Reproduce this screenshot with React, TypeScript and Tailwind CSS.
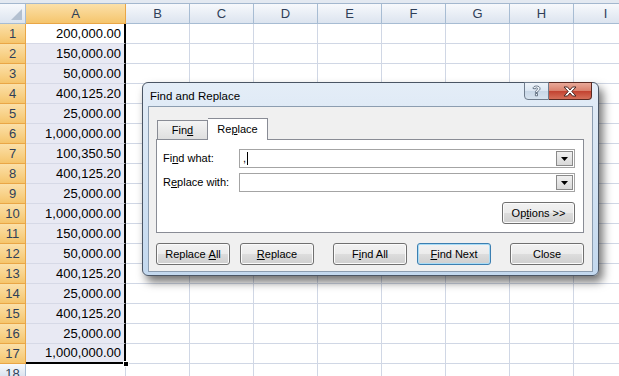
import React from "react";

const values = [
  "200,000.00",
  "150,000.00",
  "50,000.00",
  "400,125.20",
  "25,000.00",
  "1,000,000.00",
  "100,350.50",
  "400,125.20",
  "25,000.00",
  "1,000,000.00",
  "150,000.00",
  "50,000.00",
  "400,125.20",
  "25,000.00",
  "400,125.20",
  "25,000.00",
  "1,000,000.00",
];

const cols = ["B", "C", "D", "E", "F", "G", "H", "I"];

const btnBg =
  "bg-[linear-gradient(to_bottom,#f2f2f2_0%,#ebebeb_50%,#dddddd_50%,#cfcfcf_100%)]";

const Btn = ({
  children,
  className = "",
  focused = false,
}: {
  children: React.ReactNode;
  className?: string;
  focused?: boolean;
}) => (
  <div
    className={`h-[22px] rounded-[3px] border flex items-center justify-center text-[11px] text-black ${btnBg} ${
      focused
        ? "border-[#3c7fb1] shadow-[inset_0_0_0_1px_#a9dcf6]"
        : "border-[#707070] shadow-[inset_0_0_0_1px_#fbfbfb]"
    } ${className}`}
  >
    {children}
  </div>
);

const Combo = ({ value }: { value?: string }) => (
  <div className="w-[336px] h-[19px] border border-[#a4a4a4] bg-white flex items-stretch">
    <div className="flex-1 flex items-center pl-[3px] text-[11px] text-black">
      {value && (
        <>
          <span>{value}</span>
          <span className="w-px h-[13px] bg-black ml-px" />
        </>
      )}
    </div>
    <div className="w-[17px] border border-[#8a8a8a] m-px bg-gradient-to-b from-[#f0f0f0] to-[#d9d9d9] flex items-center justify-center">
      <svg width="7" height="4" viewBox="0 0 7 4">
        <path d="M0 0h7L3.5 4z" fill="#000" />
      </svg>
    </div>
  </div>
);

const Dialog = () => (
  <div className="absolute left-[142px] top-[82px] w-[457px] h-[194px] rounded-[6px] border border-[#4a5564] bg-gradient-to-b from-[#e4edf7] via-[#d3e3f3] to-[#c3d8ee] shadow-[4px_6px_10px_rgba(0,0,0,0.55)] font-['Liberation_Sans',sans-serif]">
    {/* title bar */}
    <div className="h-[23px] flex items-start relative">
      <div className="pl-[7px] pt-[8px] text-[11.5px] text-black leading-none">
        Find and Replace
      </div>
      <div className="ml-auto mr-[6px] flex -mt-px">
        <div className="w-[25px] h-[18px] rounded-bl-[4px] border border-[#6f7c8c] bg-[linear-gradient(to_bottom,#eef3f9_0%,#dbe6f2_50%,#c7d6e6_50%,#d7e3ef_100%)] flex items-center justify-center">
          <svg width="9" height="12" viewBox="0 0 9 12">
            <path
              d="M1 3.5C1 1.8 2.6 1 4.5 1S8 2 8 3.6c0 1.3-.9 1.9-1.8 2.5-.6.4-.7.7-.7 1.4H3.4c0-1.3.3-1.8 1.2-2.4.6-.4.9-.7.9-1.3 0-.6-.4-1-1.1-1s-1.1.4-1.1 1.1z M3.4 8.5h2.1v2.3H3.4z"
              fill="#eef3f8"
              stroke="#4e5d70"
              strokeWidth="0.8"
            />
          </svg>
        </div>
        <div className="w-[43px] h-[18px] rounded-br-[4px] border border-l-0 border-[#5a2a22] bg-[linear-gradient(to_bottom,#e8a898_0%,#d9806c_50%,#c2412f_50%,#d5705a_100%)] flex items-center justify-center">
          <svg width="14" height="11" viewBox="0 0 14 11">
            <path
              d="M1 1h3.5L7 4 9.5 1H13L8.8 5.5 13 10H9.5L7 7 4.5 10H1l4.2-4.5z"
              fill="#fff"
              stroke="#4a2a26"
              strokeWidth="1"
            />
          </svg>
        </div>
      </div>
    </div>
    {/* client area */}
    <div className="mx-[5px] h-[166px] border border-[#8c9db0] bg-[#f0f0f0] px-[7px]">
      {/* tabs */}
      <div className="flex items-end h-[32px] pl-px">
        <div className="w-[51px] h-[19px] border border-b-0 border-[#898c95] bg-gradient-to-b from-[#f4f4f4] to-[#dfdfdf] flex items-center justify-center text-[11px] text-black">
          Fin<span className="underline">d</span>
        </div>
        <div className="w-[60px] h-[22px] border border-b-0 border-l-0 border-[#898c95] bg-white flex items-center justify-center text-[11px] text-black relative top-px pb-px">
          Re<span className="underline">p</span>lace
        </div>
      </div>
      {/* panel */}
      <div className="w-[428px] h-[94px] border border-[#898c95] bg-white pt-[9px] pl-[6px]">
        <div className="flex items-center">
          <div className="w-[76px] text-[11px] text-black">
            Fi<span className="underline">n</span>d what:
          </div>
          <Combo value="," />
        </div>
        <div className="flex items-center mt-[5px]">
          <div className="w-[76px] text-[11px] text-black">
            R<span className="underline">e</span>place with:
          </div>
          <Combo />
        </div>
        <div className="flex justify-end pr-[8px] mt-[10px]">
          <Btn className="w-[73px] h-[21px]">
            Op<span className="underline">t</span>ions &gt;&gt;
          </Btn>
        </div>
      </div>
      {/* bottom buttons */}
      <div className="flex mt-[10px]">
        <Btn className="w-[74px]">
          Replace <span className="underline ml-[3px]">A</span>ll
        </Btn>
        <Btn className="w-[74px] ml-[10px]">
          <span className="underline">R</span>eplace
        </Btn>
        <Btn className="w-[74px] ml-[19px]">
          F<span className="underline">i</span>nd All
        </Btn>
        <Btn className="w-[74px] ml-[10px]" focused>
          <span className="underline">F</span>ind Next
        </Btn>
        <Btn className="w-[74px] ml-[19px]">Close</Btn>
      </div>
    </div>
  </div>
);

const hdr =
  "bg-gradient-to-b from-[#f7f9fc] to-[#dce4ef] border-r border-b border-[#a7bcd3] text-[#2f3f58]";
const hdrSel =
  "bg-gradient-to-b from-[#fbe0a8] to-[#f5c56c] border-r border-b border-[#e9a646] text-[#2f3f58]";

export default function App() {
  return (
    <div className="w-[619px] h-[376px] overflow-hidden relative bg-white font-['Liberation_Sans',sans-serif] text-[13px]">
      <div className="h-[4px] bg-[#e3e9f1] border-b border-[#a3b7ce]" />
      {/* column headers */}
      <div className="flex h-[20px]">
        <div className={`w-[26px] shrink-0 ${hdr} relative`}>
          <svg
            className="absolute right-[3px] bottom-[3px]"
            width="11"
            height="11"
            viewBox="0 0 11 11"
          >
            <path d="M11 0v11H0z" fill="#b3c0d0" />
          </svg>
        </div>
        <div
          className={`w-[100px] shrink-0 ${hdrSel} flex items-center justify-center`}
        >
          A
        </div>
        {cols.map((c) => (
          <div
            key={c}
            className={`w-[64px] shrink-0 ${hdr} flex items-center justify-center`}
          >
            {c}
          </div>
        ))}
      </div>
      {/* rows */}
      {values.map((v, i) => (
        <div key={i} className="flex h-[20px]">
          <div
            className={`w-[26px] shrink-0 ${hdrSel} flex items-center justify-center`}
          >
            {i + 1}
          </div>
          <div
            className={`w-[100px] shrink-0 border-r-2 border-black flex items-center justify-end pr-[3px] text-black ${
              i === 0 ? "bg-white" : "bg-[#e8e9f3]"
            } ${i === values.length - 1 ? "border-b-2" : "border-b border-b-[#d6d9e6]"}`}
          >
            {v}
          </div>
          {cols.map((c) => (
            <div
              key={c}
              className="w-[64px] shrink-0 border-r border-b border-[#d0d7e5]"
            />
          ))}
        </div>
      ))}
      <div className="flex h-[12px] overflow-hidden">
        <div
          className={`w-[26px] shrink-0 ${hdr} border-b-0 flex items-start justify-center pt-[3px] text-[13px] leading-[13px]`}
        >
          18
        </div>
        <div className="w-[100px] shrink-0 border-r border-[#d0d7e5]" />
        {cols.map((c) => (
          <div key={c} className="w-[64px] shrink-0 border-r border-[#d0d7e5]" />
        ))}
      </div>
      {/* fill handle */}
      <div className="absolute left-[123px] top-[361px] w-[6px] h-[6px] bg-black border border-white" />
      <Dialog />
    </div>
  );
}
